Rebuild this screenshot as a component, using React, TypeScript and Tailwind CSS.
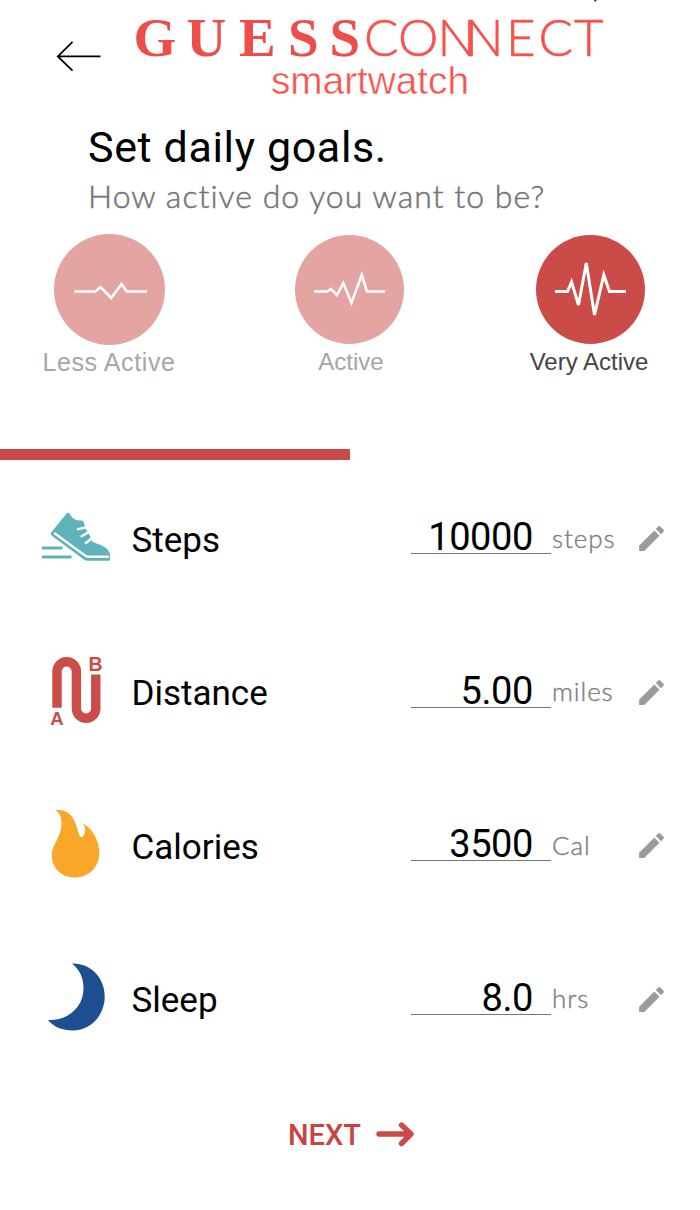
import React from "react";
import { MdEdit } from "react-icons/md";

type Goal = { label: string; value: string; unit: string; icon: React.ReactNode };

function ShoeIcon() {
  return (
    <svg width="70" height="70" viewBox="0 0 70 70" fill="none">
      <g transform="translate(0 1)">
        <path
          d="M26.2 10.8 C27.5 10.2 28.8 11.2 29.6 13.2 C31.5 17 36 18.8 41 18.6 Q42.8 19 43.2 21.5 L44.5 27 L48.5 33 L51.5 40 C57 42 63 43.5 66.5 47.5 Q69 50.5 69 54 V57.5 Q69 58.8 67.8 58.8 H46.5 Q44.5 58.8 42.8 57.4 L10.8 33.8 Q9 32.2 10.3 30.3 Z"
          fill="#5fb2b8"
        />
        <path d="M13.2 31 L43.8 53.4 Q45.5 54.8 47.5 54.8 H67.8" stroke="white" strokeWidth="2.4" />
        <path d="M37 27.2 L45 25.4 M40.5 34.2 L48 30 M44.8 41 L51.2 36.2" stroke="white" strokeWidth="2.3" strokeLinecap="round" />
        <path d="M1 46 H21.5 M1 55 H30.5" stroke="#5fb2b8" strokeWidth="2.8" />
      </g>
    </svg>
  );
}

function RouteIcon() {
  return (
    <svg width="70" height="70" viewBox="0 0 70 70" fill="none" className="overflow-visible">
      <path d="M16 52.7 V16.5 A9.6 9.7 0 0 1 35.4 16.5 V53.5 A9.6 9.7 0 0 0 54.8 53.5 V19.5" stroke="#cc4c49" strokeWidth="9.4" />
      <text x="9.2" y="69.5" fontFamily="Liberation Sans" fontWeight="700" fontSize="18.5" fill="#cc4c49">A</text>
      <text x="47.5" y="15.6" fontFamily="Liberation Sans" fontWeight="700" fontSize="19.5" fill="#cc4c49">B</text>
    </svg>
  );
}

function FlameIcon() {
  return (
    <svg width="70" height="70" viewBox="0 0 70 70" fill="none">
      <path
        d="M14 2.4 C27 -.2 33 9 36.5 21 C37.3 24 38.5 29 40.7 29 C44.3 28.5 45.8 20 41.7 15.2 C51 20 58.3 32 58.3 45 C58.3 60 47 69.5 34 69.5 C21 69.5 10.8 60.5 10.8 47 C10.8 36 20.5 30 20.5 15 C20.5 8.5 18 3.5 14 2.4 Z"
        fill="#f9a728"
      />
    </svg>
  );
}

function MoonIcon() {
  return (
    <svg width="70" height="70" viewBox="0 0 70 70" fill="none">
      <path d="M31 1.5 C50 1 63.7 16 63.7 34.5 C63.7 53 50 68.5 31.5 68.5 C22 68.5 12.5 65 7 58 C28 59 42.5 44 42.5 26.5 C42.5 16 39 8 31 1.5 Z" fill="#1d4f91" />
    </svg>
  );
}

const goals: Goal[] = [
  { label: "Steps", value: "10000", unit: "steps", icon: <ShoeIcon /> },
  { label: "Distance", value: "5.00", unit: "miles", icon: <RouteIcon /> },
  { label: "Calories", value: "3500", unit: "Cal", icon: <FlameIcon /> },
  { label: "Sleep", value: "8.0", unit: "hrs", icon: <MoonIcon /> },
];

function Logo() {
  return (
    <svg width="480" height="110" viewBox="130 0 480 110" fill="#ee4e49">
      <text x="133.5 186.5 239 288 329.5" y="56" fontFamily="Liberation Serif" fontWeight="700" fontSize="55">GUESS</text>
      <text x="364 398 437.5 465 506 538.5 574" y="55.5" fontFamily="Lato" fontWeight="300" fontSize="51" fill="#f8524c" stroke="#f8524c" strokeWidth="0.6">CONNECT</text>
      <text x="271" y="94" fontFamily="Liberation Sans" fontSize="39.5" fill="#f8524c" stroke="white" strokeWidth="0.45" textLength="198" lengthAdjust="spacingAndGlyphs">smartwatch</text>
      <path d="M594 0 h2.5 l-.5 1.5 h-1.5 z" fill="#333" />
    </svg>
  );
}

export default function App() {
  return (
    <main className="flex h-[1210px] w-[700px] flex-col overflow-hidden bg-white">
      <header className="flex h-[110px] shrink-0 items-start pl-[56px]">
        <button aria-label="Back" className="mt-[41px] mr-[29px]">
          <svg width="45" height="31" viewBox="0 0 45 31" fill="none" stroke="black" strokeWidth="1.8">
            <path d="M16.5 .8 L1.8 15.4 L16.5 29.6 M1.8 15.4 H44.5" />
          </svg>
        </button>
        <Logo />
      </header>

      <section className="h-[114px] shrink-0 pt-[11px] pl-[88px] whitespace-nowrap">
        <h1 className="font-[Roboto,sans-serif] text-[43px] leading-[52px] tracking-[0.63px] text-black">Set daily goals.</h1>
        <p className="font-[Lato,sans-serif] text-[32px] leading-[46px] font-light tracking-[1.02px] text-[#757575] [-webkit-text-stroke:0.5px_#757575]">How active do you want to be?</p>
      </section>

      <section className="flex h-[225px] shrink-0 pt-[10px] whitespace-nowrap">
        <button className="flex w-[219px] flex-col items-center font-['Liberation_Sans',sans-serif] text-[25px] leading-[34px] tracking-[0.6px] text-[#a6a6a6]">
          <svg width="111" height="111" viewBox="0 0 111 111" fill="none">
            <circle cx="55.5" cy="55.5" r="55.5" fill="#e3a4a2" />
            <path d="M20.5 57.5 H41.5 L46.5 53 L57.2 64 L67.5 50 L72.7 57.5 H93" stroke="white" strokeWidth="2.6" />
          </svg>
          <span className="-ml-px">Less Active</span>
        </button>
        <button className="ml-[20px] flex w-[221px] flex-col items-center pt-px font-['Liberation_Sans',sans-serif] text-[24px] leading-[36px] text-[#a6a6a6]">
          <svg width="109" height="109" viewBox="0 0 109 109" fill="none" className="mr-px">
            <circle cx="54.5" cy="54.5" r="54.5" fill="#e3a4a2" />
            <path d="M19 56.5 H32 L36 54 L42 60 L48.3 48 L56.5 68 L66.7 40 L72 56.5 H90" stroke="white" strokeWidth="2.6" />
          </svg>
          <span className="pl-[3px]">Active</span>
        </button>
        <button className="ml-[20px] flex w-[220px] flex-col items-center pt-px font-['Liberation_Sans',sans-serif] text-[24px] leading-[36px] text-[#444]">
          <svg width="109" height="109" viewBox="0 0 109 109" fill="none">
            <circle cx="54.5" cy="54.5" r="54.5" fill="#ca4b48" />
            <path d="M19 56.5 H31.5 L35.5 47 L42.5 70 L50.3 28 L58.5 80 L67.8 40 L73.5 56.5 H90" stroke="white" strokeWidth="3" />
          </svg>
          <span className="-ml-[2px]">Very Active</span>
        </button>
      </section>

      <div className="h-[11px] w-[350px] shrink-0 bg-[#c94b48]" />

      <ul className="h-[614px] shrink-0 pt-[2px]">
        {goals.map((goal) => (
          <li key={goal.label} className="flex h-[153.5px] items-center pl-[41px]">
            <div className="pb-[5px]">{goal.icon}</div>
            <span className="ml-[20.5px] w-[279.5px] pt-[4px] font-[Roboto,sans-serif] text-[35px] leading-[42px] text-black">{goal.label}</span>
            <div className="w-[140px] pb-[5px]">
              <div className="h-[36px] border-b border-[#777] pr-[18px] text-right font-[Roboto,sans-serif] text-[38px] leading-[39px] tracking-[-0.4px] text-black">{goal.value}</div>
            </div>
            <span className="w-[84px] pb-[2px] pl-px font-[Lato,sans-serif] text-[26px] leading-[32px] font-light tracking-[0.9px] text-[#808080] [-webkit-text-stroke:0.4px_#808080]">{goal.unit}</span>
            <MdEdit className="size-[33px] text-[#9b9b9b]" />
          </li>
        ))}
      </ul>

      <button className="mt-[39px] ml-[288px] flex w-[127px] items-center justify-between font-[Roboto,sans-serif] text-[29px] leading-[44px] font-medium text-[#c94441]">
        NEXT
        <svg width="39" height="26" viewBox="0 0 39 26" fill="none" stroke="#cb4a48" strokeWidth="5.4" strokeLinecap="round" strokeLinejoin="round">
          <path d="M3 12 H34.5 M25.5 3 L35 12 L25.5 21.5" />
        </svg>
      </button>
    </main>
  );
}
